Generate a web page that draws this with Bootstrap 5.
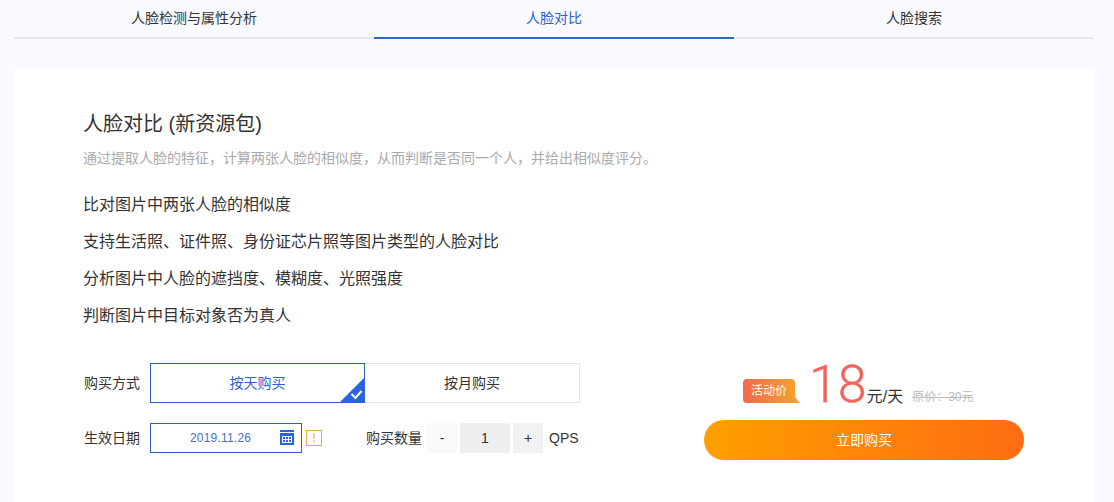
<!DOCTYPE html>
<html lang="zh">
<head>
    <meta charset="UTF-8">
    <meta name="viewport" content="width=device-width, initial-scale=1.0">
    <title>人脸对比</title>
    <link href="https://cdn.jsdelivr.net/npm/bootstrap@5.3.0/dist/css/bootstrap.min.css" rel="stylesheet">
    <style>
        body {
            background-color: #f8faff;
            font-family: "Liberation Sans", "Noto Sans CJK SC", sans-serif;
            color: #333;
            font-size: 14px;
            overflow: hidden;
        }
        .page-wrap { width: 1080px; margin-left: 14px; }
        .face-tabs { border-bottom: 2px solid #e6e9f0; height: 39px; }
        .face-tabs .nav-link {
            color: #333;
            height: 39px;
            line-height: 36px;
            padding: 0;
            border-bottom: 2px solid transparent;
        }
        .face-tabs .nav-link.active { color: #2d5fd3; border-bottom-color: #2d6cc4; }
        .panel { background: #fff; margin-top: 30px; padding: 41px 70px 47px; }
        .panel-title { font-size: 20px; line-height: 28px; font-weight: 400; margin: 0 0 0 -1px; color: #333; }
        .panel-desc { line-height: 21px; margin: 10px 0 17px -1px; color: #aaa; }
        .feature-list { font-size: 16px; line-height: 37px; margin: 0 0 29px -1px; padding: 0; list-style: none; }
        .buy-line { margin-bottom: 20px; }
        .field-label { width: 66px; flex: none; }
        .buy-type { width: 215px; height: 40px; line-height: 38px; text-align: center; border: 1px solid #e3e3e3; border-left: 0; color: #333; }
        .buy-type.picked { position: relative; border: 1px solid #2d5fc4; color: #2d5fd3; }
        .buy-type.picked svg { position: absolute; right: -1px; bottom: -1px; }
        .date-box { width: 152px; height: 30px; border: 1px solid #2d5fc4; color: #4a70cc; font-size: 12px; line-height: 28px; padding-left: 39px; position: relative; letter-spacing: .2px; }
        .date-box svg { position: absolute; right: 7px; top: 6px; }
        .warn-box { width: 16px; height: 16px; border: 1px solid #efa93a; margin-left: 4px; color: #f3c67a; font-size: 12px; line-height: 14px; text-align: center; font-weight: 700; }
        .qty-label { margin-left: 44px; width: 61px; flex: none; }
        .qty-btn { width: 30px; height: 30px; line-height: 30px; text-align: center; background: #f2f2f2; }
        .qty-btn.off { background: #f9f9f9; }
        .qty-num { width: 50px; height: 30px; line-height: 30px; text-align: center; background: #eee; margin: 0 3px; }
        .qps { margin-left: 6px; font-size: 14px; }
        .buy-side { width: 320px; flex: none; }
        .price-row { height: 40px; margin-bottom: 17px; padding-left: 39px; }
        .promo-tag {
            position: relative;
            width: 52px;
            height: 24px;
            line-height: 24px;
            border-radius: 4px 4px 0 4px;
            background: linear-gradient(90deg, #f2694f, #f5a030);
            color: #fff;
            font-size: 12px;
            text-align: center;
            white-space: nowrap;
        }
        .promo-tag::after {
            content: "";
            position: absolute;
            left: 52px;
            bottom: 0;
            border-left: 5px solid #f5a030;
            border-top: 6px solid transparent;
        }
        .price-num { font-family: Roboto, "Liberation Sans", sans-serif; font-weight: 300; font-size: 52px; line-height: 36px; color: #f0645a; margin-left: 14px; -webkit-text-stroke: .4px #f0645a; }
        .price-unit { font-size: 16px; line-height: 12px; margin-left: 0; }
        .price-old { font-size: 12px; color: #bbb; margin-left: 9px; line-height: 12px; }
        .buy-now {
            display: block;
            width: 320px;
            height: 40px;
            padding: 0;
            border: 0;
            border-radius: 20px;
            background: linear-gradient(90deg, #ff9f00, #ff6c12);
            color: #fff;
            font-size: 14px;
        }
    </style>
</head>
<body>
    <div class="page-wrap">
        <ul class="nav nav-justified face-tabs">
            <li class="nav-item"><a class="nav-link" href="#">人脸检测与属性分析</a></li>
            <li class="nav-item"><a class="nav-link active" href="#">人脸对比</a></li>
            <li class="nav-item"><a class="nav-link" href="#">人脸搜索</a></li>
        </ul>

        <div class="panel">
            <h2 class="panel-title">人脸对比 (新资源包)</h2>
            <p class="panel-desc">通过提取人脸的特征，计算两张人脸的相似度，从而判断是否同一个人，并给出相似度评分。</p>
            <ul class="feature-list">
                <li>比对图片中两张人脸的相似度</li>
                <li>支持生活照、证件照、身份证芯片照等图片类型的人脸对比</li>
                <li>分析图片中人脸的遮挡度、模糊度、光照强度</li>
                <li>判断图片中目标对象否为真人</li>
            </ul>

            <div class="d-flex justify-content-between">
                <div>
                    <div class="d-flex align-items-center buy-line">
                        <span class="field-label">购买方式</span>
                        <div class="buy-type picked">按天购买
                            <svg width="26" height="26" viewBox="0 0 26 26">
                                <path d="M26 0V26H0Z" fill="#2a62e0"/>
                                <path d="M12.5 17l4 4 6-7" fill="none" stroke="#fff" stroke-width="2"/>
                            </svg>
                        </div>
                        <div class="buy-type">按月购买</div>
                    </div>
                    <div class="d-flex align-items-center">
                        <span class="field-label">生效日期</span>
                        <div class="date-box">2019.11.26
                            <svg width="14" height="15" viewBox="0 0 14 15">
                                <path d="M0 0H14V2H0Z" fill="#2a62e0"/>
                                <path d="M0 3H14V15H0Z" fill="#2a62e0"/>
                                <path d="M2 6H12V13H2Z" fill="#fff"/>
                                <path d="M3 7H5V9H3ZM6 7H8V9H6ZM9 7H11V9H9ZM3 10H5V12H3ZM6 10H8V12H6ZM9 10H11V12H9Z" fill="#2a62e0"/>
                            </svg>
                        </div>
                        <div class="warn-box">!</div>
                        <span class="qty-label">购买数量</span>
                        <div class="qty-btn off">-</div>
                        <div class="qty-num">1</div>
                        <div class="qty-btn">+</div>
                        <span class="qps">QPS</span>
                    </div>
                </div>

                <div class="buy-side">
                    <div class="d-flex align-items-end price-row">
                        <div class="promo-tag">活动价</div>
                        <span class="price-num">18</span>
                        <span class="price-unit">元/天</span>
                        <s class="price-old">原价：30元</s>
                    </div>
                    <button type="button" class="btn buy-now">立即购买</button>
                </div>
            </div>
        </div>
    </div>

    <script src="https://cdn.jsdelivr.net/npm/bootstrap@5.3.0/dist/js/bootstrap.bundle.min.js"></script>
</body>
</html>
